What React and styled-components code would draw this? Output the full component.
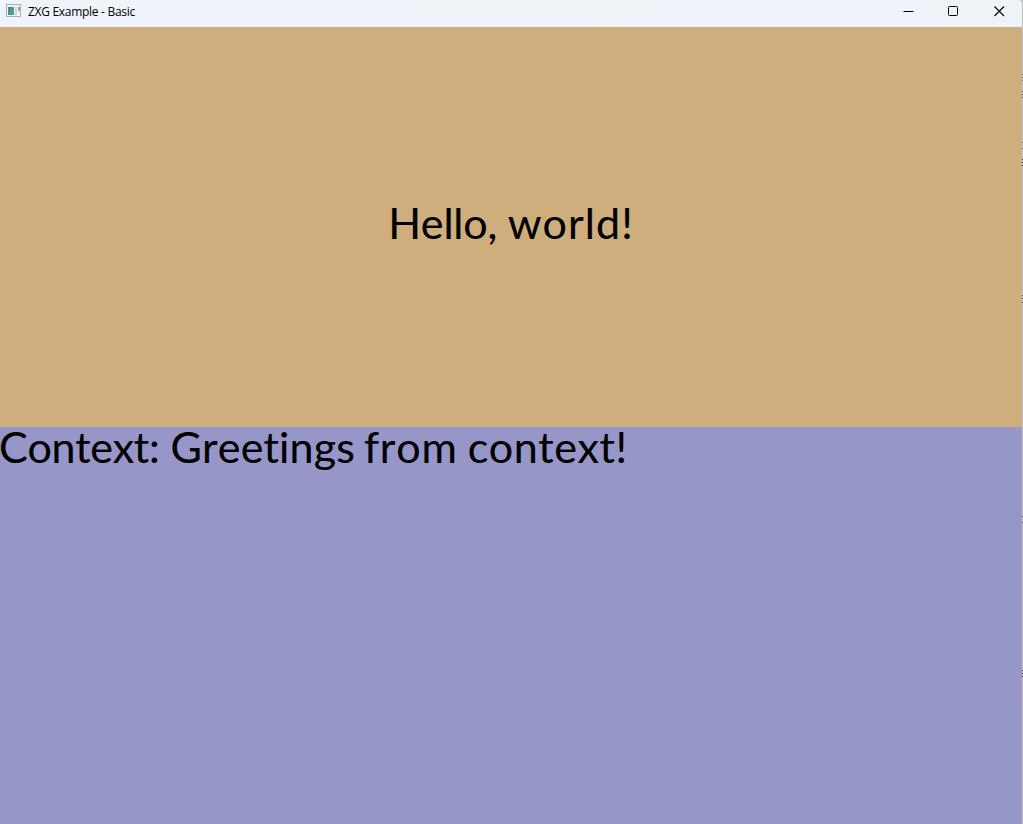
import React from "react";
import styled, { createGlobalStyle } from "styled-components";

const GlobalStyle = createGlobalStyle`
  * { box-sizing: border-box; }
  body { margin: 0; overflow: hidden; }
`;

const Desktop = styled.div`
  display: flex;
  width: 1023px;
  height: 824px;
  background: #c3c1c6;
`;

const Window = styled.main`
  flex: 1;
  display: grid;
  grid-template-rows: 27px 400px 1fr;
  color: #000;
`;

const Edge = styled.svg`
  width: 1px;
  height: 824px;
`;

const TitleBar = styled.header`
  display: flex;
  align-items: flex-start;
  padding-left: 6px;
  background: linear-gradient(90deg, #eff4fb 0%, #eff4f9 60%, #f0f3fc 86%, #eef3f8 92%);
  border-top-right-radius: 4px;
`;

const AppIcon = styled.svg`
  width: 16px;
  height: 14px;
  margin-top: 4px;
`;

const Title = styled.span`
  flex: 1;
  padding-left: 6px;
  font: 12px/24px "Open Sans", "Noto Sans", sans-serif;
  letter-spacing: -0.29px;
  white-space: pre;
`;

const Controls = styled.div`
  display: flex;
`;

const Control = styled.button`
  width: 45.5px;
  height: 23px;
  padding: 0;
  border: 0;
  background: none;
  display: flex;
  align-items: center;
  justify-content: center;
`;

const Panel = styled.section`
  display: flex;
  justify-content: ${(p) => (p.$centered ? "center" : "flex-start")};
  align-items: ${(p) => (p.$centered ? "center" : "flex-start")};
  background: ${(p) => p.$color};
`;

const Message = styled.p`
  margin: 0;
  padding-bottom: ${(p) => p.$lift || 0}px;
  font: 43px/40px Lato, sans-serif;
  font-kerning: none;
  font-variant-ligatures: none;
  -webkit-text-stroke: 0.15px #000;
  white-space: pre;
`;

const Word = styled.span`
  letter-spacing: ${(p) => p.$tracking || 0}px;
  margin-left: ${(p) => p.$shift || 0}px;
`;

const ticks = [
  [74, "#98704c"], [77, "#686868"], [80, "#98704c"],
  [91, "#55557c"], [94, "#44447c"], [97, "#55557c"],
  [142, "#98704c"], [148, "#887060"],
  [159, "#333"], [162, "#333"], [165, "#333"],
  [295, "#555"], [298, "#555"], [302, "#333"],
  [516, "#555570"], [522, "#555570"],
  [670, "#333355"], [673, "#333355"], [676, "#333355"],
];

export default function App() {
  return (
    <>
      <GlobalStyle />
      <Desktop>
        <Window>
          <TitleBar>
            <AppIcon viewBox="0 0 16 14">
              <defs>
                <linearGradient id="pane" x1="0" y1="0" x2="1" y2="1">
                  <stop offset="0" stopColor="#477fb0" />
                  <stop offset="1" stopColor="#55ad79" />
                </linearGradient>
              </defs>
              <rect x="0.5" y="0.5" width="14" height="12" fill="#f4f4f4" stroke="#aaaeb2" />
              <rect x="2" y="3" width="6" height="8" fill="url(#pane)" />
              <rect x="9" y="3" width="2" height="8" fill="#d1d5d6" />
              <rect x="12" y="3" width="2" height="4" fill="#9aa7aa" />
            </AppIcon>
            <Title>ZXG Example - Basic</Title>
            <Controls>
              <Control aria-label="Minimize">
                <svg width="11" height="11" viewBox="0 0 11 11"><path d="M.5 5.5h10" stroke="#000" /></svg>
              </Control>
              <Control aria-label="Maximize">
                <svg width="11" height="11" viewBox="0 0 11 11"><rect x=".5" y=".5" width="9" height="9" rx="1" fill="none" stroke="#000" /></svg>
              </Control>
              <Control aria-label="Close">
                <svg width="11" height="11" viewBox="0 0 11 11"><path d="M.5.5l9.5 9.5M10 .5l-9.5 9.5" stroke="#000" strokeWidth="1.1" /></svg>
              </Control>
            </Controls>
          </TitleBar>
          <Panel $color="#cdae7c" $centered>
            <Message $lift={8}>
              <Word $tracking={-0.15}>Hello,</Word> <Word $tracking={1.1} $shift={-0.6}>world!</Word>
            </Message>
          </Panel>
          <Panel $color="#9796c8">
            <Message>
              <Word $tracking={-0.3} $shift={-1}>Context:</Word>{" "}
              <Word $tracking={0.15} $shift={0}>Greetings</Word>{" "}
              <Word $tracking={0.8} $shift={-2}>from</Word>{" "}
              <Word $tracking={0.55} $shift={-1}>context!</Word>
            </Message>
          </Panel>
        </Window>
        <Edge viewBox="0 0 1 824" shapeRendering="crispEdges">
          {ticks.map(([y, color]) => (
            <rect key={y} y={y} width="1" height="1" fill={color} />
          ))}
        </Edge>
      </Desktop>
    </>
  );
}
